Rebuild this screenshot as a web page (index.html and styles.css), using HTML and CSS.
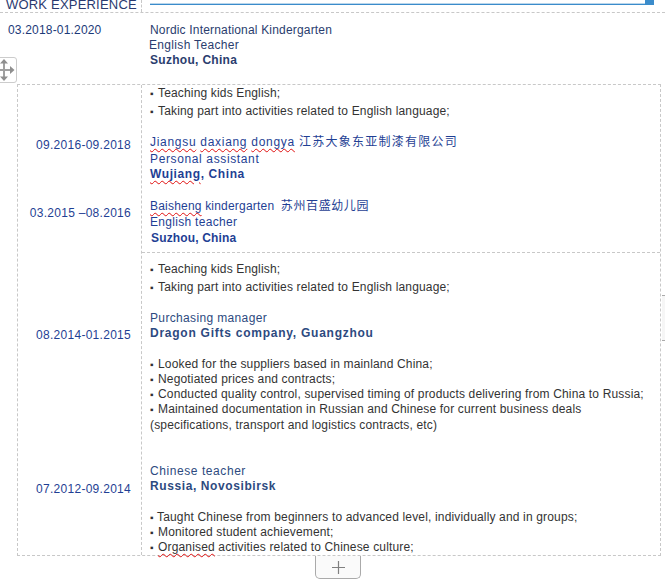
FILE: index.html
```html
<!DOCTYPE html>
<html lang="en">
<head>
<meta charset="utf-8">
<title>Work experience</title>
<link rel="stylesheet" href="styles.css">
</head>
<body>
<div class="page">
  <header class="head">
    <div class="head-title">WORK EXPERIENCE</div>
    <div class="head-rule"><span class="head-cap"></span></div>
  </header>
  <section class="intro">
    <div class="intro-date">03.2018-01.2020</div>
    <div class="intro-body">
      <div class="line navy ls18">Nordic International Kindergarten</div>
      <div class="line navy out1 ls33">English Teacher</div>
      <div class="line navy strong ls30">Suzhou, China</div>
    </div>
    <button class="move" aria-label="Move">
      <svg width="16" height="22" viewBox="0 0 16 22" fill="#8f8f8f" stroke="#a0a0a0" stroke-width="2"><path d="M5 2v18M0 11h12" fill="none"/><path d="M5 0 9 4.500H1zM5 22l4-4.500H1zM15.500 11 11 7v8z" stroke="none"/></svg>
    </button>
  </section>
  <section class="table">
    <div class="dates">
      <div class="date d1">09.2016-09.2018</div>
      <div class="date d2">03.2015 –08.2016</div>
      <div class="date d3">08.2014-01.2015</div>
      <div class="date d4">07.2012-09.2014</div>
    </div>
    <div class="content">
      <div class="cell c1">
        <div class="line dark"><span class="b">▪</span>Teaching kids English;</div>
        <div class="line dark g3"><span class="b">▪</span>Taking part into activities related to English language;</div>
        <div class="line blue ls70 g16"><span class="err">Jiangsu</span> <span class="err">daxiang</span> <span class="err">dongya</span> <span class="cjk">江苏大象东亚制漆有限公司</span></div>
        <div class="line blue ls63 g2">Personal assistant</div>
        <div class="line blue strong ls60"><span class="err">Wujiang</span>, China</div>
        <div class="line blue ls20 g17"><span class="err">Baisheng</span> kindergarten <span class="cjk2">苏州百盛幼儿园</span></div>
        <div class="line blue ls30 g1">English teacher</div>
        <div class="line blue strong ls15 g1 in1">Suzhou, China</div>
      </div>
      <div class="cell c2">
        <div class="line dark"><span class="b">▪</span>Teaching kids English;</div>
        <div class="line dark g3"><span class="b">▪</span>Taking part into activities related to English language;</div>
        <div class="line steel ls35 g16">Purchasing manager</div>
        <div class="line steel strong ls75">Dragon Gifts company, Guangzhou</div>
        <div class="line dark g16"><span class="b">▪</span>Looked for the suppliers based in mainland China;</div>
        <div class="line dark"><span class="b">▪</span>Negotiated prices and contracts;</div>
        <div class="line dark"><span class="b">▪</span>Conducted quality control, supervised timing of products delivering from China to Russia;</div>
        <div class="line dark"><span class="b">▪</span>Maintained documentation in Russian and Chinese for current business deals</div>
        <div class="line dark g1">(specifications, transport and logistics contracts, etc)</div>
        <div class="line steel ls57 g31">Chinese teacher</div>
        <div class="line steel strong ls60">Russia, Novosibirsk</div>
        <div class="line dark g16"><span class="b tight">▪</span>Taught Chinese from beginners to advanced level, individually and in groups;</div>
        <div class="line dark"><span class="b">▪</span>Monitored student achievement;</div>
        <div class="line dark"><span class="b">▪</span><span class="err">Organised</span> activities related to Chinese culture;</div>
      </div>
    </div>
  </section>
  <div class="add-row"><button class="add" aria-label="Add"><svg width="13" height="13" viewBox="0 0 13 13" stroke="#808080" stroke-width="1.200"><path d="M6.500 0v13M0 6.500h13"/></svg></button></div>
  <div class="side-tab"></div>
</div>
</body>
</html>
```
FILE: styles.css
```css
* { box-sizing: border-box; }
html, body { margin: 0; padding: 0; background: #fff; }
.page { position: relative; width: 665px; height: 580px; overflow: hidden; font: 12px/15px "Liberation Sans", "Noto Sans CJK SC", sans-serif; }
.head { display: flex; height: 13px; border-bottom: 1px dashed #c8c8c8; }
.head-title { width: 142px; height: 12px; padding-left: 6px; border-right: 1px dashed #c8c8c8; font-size: 13px; line-height: 10px; color: #2a3a70; letter-spacing: .2px; overflow: hidden; }
.head-rule { position: relative; margin-left: 8px; width: 504px; height: 5px; border-bottom: 1px solid #3b8ccb; box-shadow: inset 0 -1px 0 #b9d6ec; }
.head-cap { position: absolute; right: 0; top: 0; width: 9px; height: 4px; background: #3b8ccb; }
.intro { position: relative; display: flex; height: 71px; }
.intro-date { width: 150px; padding: 10px 0 0 8px; color: #1c3a78; line-height: 15px; letter-spacing: .18px; }
.intro-body { padding-top: 10px; }
.line { height: 15px; line-height: 15px; white-space: nowrap; }
.out1 { margin-left: -1px; }
.in1 { margin-left: 1px; }
.navy { color: #2a3d6e; }
.dark { color: #333; letter-spacing: .16px; }
.blue { color: #1f3f94; }
.steel { color: #2d4a80; }
.strong { font-weight: 700; }
.ls15 { letter-spacing: .15px; }
.ls18 { letter-spacing: .18px; }
.ls20 { letter-spacing: .2px; }
.ls30 { letter-spacing: .3px; }
.ls33 { letter-spacing: .33px; }
.ls35 { letter-spacing: .35px; }
.ls57 { letter-spacing: .57px; }
.ls60 { letter-spacing: .6px; }
.ls63 { letter-spacing: .63px; }
.ls70 { letter-spacing: .7px; }
.ls75 { letter-spacing: .75px; }
.cjk { letter-spacing: 1.25px; }
.cjk2 { margin-left: 3px; letter-spacing: .6px; }
.b { display: inline-block; width: 8px; font-size: 10px; letter-spacing: 0; }
.tight { width: 7px; }
.move { position: absolute; left: -2px; top: 44px; width: 19px; height: 26px; padding: 0 1px 0 0; display: flex; align-items: center; justify-content: center; background: #fff; border: 1px solid #ccc; border-radius: 0 3px 3px 0; }
.table { display: flex; margin-left: 17px; width: 644px; height: 472px; border: 1px dashed #c8c8c8; }
.dates { width: 124px; height: 100%; border-right: 1px dashed #c8c8c8; padding-right: 10px; text-align: right; color: #1f3f94; letter-spacing: .28px; }
.date { height: 15px; line-height: 15px; white-space: nowrap; }
.d1 { margin-top: 53px; }
.d2 { margin-top: 53px; }
.d3 { margin-top: 107px; }
.d4 { margin-top: 139px; }
.content { flex: 1; min-width: 0; }
.cell { padding-left: 8px; }
.c1 { height: 168px; padding-top: 1px; border-bottom: 1px dashed #c8c8c8; }
.c2 { padding-top: 9px; }
.g1 { margin-top: 1px; }
.g2 { margin-top: 2px; }
.g3 { margin-top: 3px; }
.g16 { margin-top: 16px; }
.g17 { margin-top: 17px; }
.g31 { margin-top: 31px; }
.err { text-decoration: underline wavy #e01010 1px; text-underline-offset: 2px; }
.add-row { display: flex; padding-left: 315px; }
.add { width: 46px; height: 23px; padding: 0; display: flex; align-items: center; justify-content: center; background: #fafafa; border: 1px solid #aaa; border-top: 0; border-radius: 0 0 5px 5px; }
.side-tab { position: absolute; right: 0; top: 295px; width: 3px; height: 46px; background: #f6f6f6; border-top: 1px solid #aaa; border-bottom: 1px solid #aaa; }
```
